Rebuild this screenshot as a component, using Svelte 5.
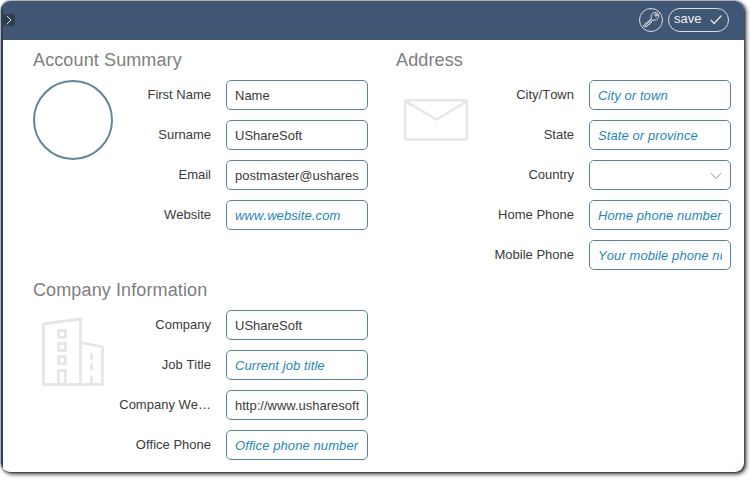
<script>
  const account = [
    { label: 'First Name', value: 'Name' },
    { label: 'Surname', value: 'UShareSoft' },
    { label: 'Email', value: 'postmaster@usharesoft.com' },
    { label: 'Website', hint: 'www.website.com' }
  ];
  const company = [
    { label: 'Company', value: 'UShareSoft' },
    { label: 'Job Title', hint: 'Current job title' },
    { label: 'Company We…', value: 'http://www.usharesoft.com' },
    { label: 'Office Phone', hint: 'Office phone number' }
  ];
  const address = [
    { label: 'City/Town', hint: 'City or town' },
    { label: 'State', hint: 'State or province' },
    { label: 'Country', select: true },
    { label: 'Home Phone', hint: 'Home phone number' },
    { label: 'Mobile Phone', hint: 'Your mobile phone number' }
  ];
</script>

{#snippet fields(rows)}
  <div class="fields">
    {#each rows as row}
      <div class="row">
        <span class="label">{row.label}</span>
        <div class="input" class:select={row.select}>
          {#if row.select}
            <svg width="12" height="8" viewBox="0 0 12 8"><path d="M.7 1 6 6.3 11.3 1" /></svg>
          {:else}
            <span class="text" class:hint={row.hint}>{row.hint ?? row.value}</span>
          {/if}
        </div>
      </div>
    {/each}
  </div>
{/snippet}

<div class="page">
  <div class="window">
    <div class="edge"></div>
    <div class="main">
      <header>
        <button class="expand" aria-label="Expand">
          <svg width="12" height="12" viewBox="0 0 12 12"><path d="M4 2 8 6 4 10" /></svg>
        </button>
        <div class="actions">
          <button class="key" aria-label="Key">
            <svg width="24" height="24" viewBox="0 0 24 24">
              <path d="M12.3 10.4C11.5 7.4 13.3 4.8 15.8 4.5C18.6 4.3 20.2 6.4 19.6 8.8C19 11.4 16.5 12.8 14 12L12.7 13.2 12.5 14.6 11 14.8 10.7 16.3 9.1 16.5 8.6 18 5.2 19 4.9 17.3Z" />
              <path d="M6.4 17.4 12.6 11.7" />
              <circle cx="17" cy="7.1" r="1.2" />
            </svg>
          </button>
          <button class="save">
            <span>save</span>
            <svg width="12" height="10" viewBox="0 0 12 10"><path d="M1 5.2 4.1 8.5 11 1" /></svg>
          </button>
        </div>
      </header>
      <div class="content">
        <div class="left">
          <section class="account">
            <h2>Account Summary</h2>
            <div class="body">
              <div class="figure"><div class="avatar"></div></div>
              {@render fields(account)}
            </div>
          </section>
          <section>
            <h2>Company Information</h2>
            <div class="body">
              <div class="figure">
                <svg class="building" width="80" height="80" viewBox="0 0 80 80">
                  <path d="M10.5 74.5V13.8L47.5 9V74.5ZM47.5 32.3 69.5 37V74.5H47.5" />
                  <path d="M25.5 20.3h7v7h-7zM25.5 33.5h7v7h-7zM25.5 46.7h7v7h-7zM25.5 74V60.5h7V74" />
                  <path d="M58.5 44.5v4M58.5 54.5v4.5M58.5 67v6" />
                </svg>
              </div>
              {@render fields(company)}
            </div>
          </section>
        </div>
        <section class="address">
          <h2>Address</h2>
          <div class="body">
            <div class="figure">
              <svg class="mail" width="80" height="80" viewBox="0 0 80 80">
                <rect x="9.2" y="20.2" width="61.6" height="39.4" rx="1.5" />
                <path d="M10 21.5 40.3 39.5 70.5 21.5" />
              </svg>
            </div>
            {@render fields(address)}
          </div>
        </section>
      </div>
    </div>
  </div>
</div>

<style>
  :global(body) {
    background: #fff;
  }
  .page {
    box-sizing: border-box;
    width: 751px;
    height: 480px;
    padding: 1px 0 0 1px;
    overflow: hidden;
  }
  .window {
    display: flex;
    width: 743px;
    height: 471px;
    border-radius: 9px;
    overflow: hidden;
    background: #fff;
    box-shadow: 2px 2px 4px rgba(0, 0, 0, 0.85), 0 0 1px 1px rgba(0, 0, 0, 0.25);
    font-family: 'Liberation Sans', Arial, sans-serif;
    font-size: 13px;
    color: #3b3b3b;
  }
  .edge {
    width: 2px;
    background: #2d405c;
  }
  .main {
    flex: 1;
  }
  header {
    height: 39px;
    display: flex;
    justify-content: space-between;
    background: #405675;
  }
  button {
    box-sizing: border-box;
    padding: 0;
    font: inherit;
    color: #f0eeeb;
    background: none;
    border: 1px solid #d9dce0;
  }
  svg {
    display: block;
    fill: none;
    stroke-linecap: round;
    stroke-linejoin: round;
  }
  .expand {
    width: 12px;
    height: 12px;
    margin-top: 13px;
    border: 0;
    background: #2d3d52;
  }
  .expand svg {
    stroke: #e5e5e5;
    stroke-width: 1;
  }
  .actions {
    display: flex;
    gap: 5px;
    margin: 7px 15px 0 0;
  }
  .key {
    display: flex;
    align-items: center;
    justify-content: center;
    width: 24px;
    height: 24px;
    border-radius: 50%;
  }
  .key svg {
    flex: none;
    stroke: #dedfe0;
    stroke-width: 1;
  }
  .save {
    display: flex;
    align-items: center;
    justify-content: space-between;
    width: 61px;
    height: 24px;
    padding: 0 6px 0 5px;
    border-radius: 12px;
  }
  .save span {
    line-height: 16px;
    margin-top: -2px;
  }
  .save svg {
    stroke: #eee;
    stroke-width: 1.2;
  }
  .content {
    display: flex;
    gap: 28px;
    padding: 9px 0 0 30px;
  }
  .left,
  .address {
    width: 335px;
  }
  .account {
    height: 230px;
  }
  h2 {
    margin: 0 0 9px;
    font-size: 18px;
    line-height: 22px;
    font-weight: 400;
    letter-spacing: 0.12px;
    color: #7e7e7e;
  }
  .body {
    display: flex;
  }
  .figure {
    width: 80px;
  }
  .avatar {
    box-sizing: border-box;
    width: 80px;
    height: 80px;
    border: 2px solid #628699;
    border-radius: 50%;
  }
  .building,
  .mail {
    stroke: #e6e6e6;
    stroke-width: 2.8;
  }
  .mail {
    stroke-width: 2.4;
  }
  .fields {
    flex: 1;
    display: flex;
    flex-direction: column;
    gap: 10px;
  }
  .row {
    display: flex;
    justify-content: flex-end;
    gap: 15px;
  }
  .label {
    line-height: 30px;
    white-space: nowrap;
    font-kerning: none;
  }
  .input {
    box-sizing: border-box;
    width: 142px;
    height: 30px;
    padding: 0 8px;
    border: 1px solid #58819a;
    border-radius: 5px;
  }
  .text {
    display: block;
    overflow: hidden;
    white-space: nowrap;
    line-height: 30px;
    height: 28px;
  }
  .hint {
    font-style: italic;
    font-kerning: none;
    letter-spacing: 0.09px;
    color: #1f86b8;
  }
  .select {
    display: flex;
    align-items: center;
    justify-content: flex-end;
    padding-top: 2px;
  }
  .select svg {
    stroke: #7f9bac;
    stroke-width: 1;
  }
</style>
